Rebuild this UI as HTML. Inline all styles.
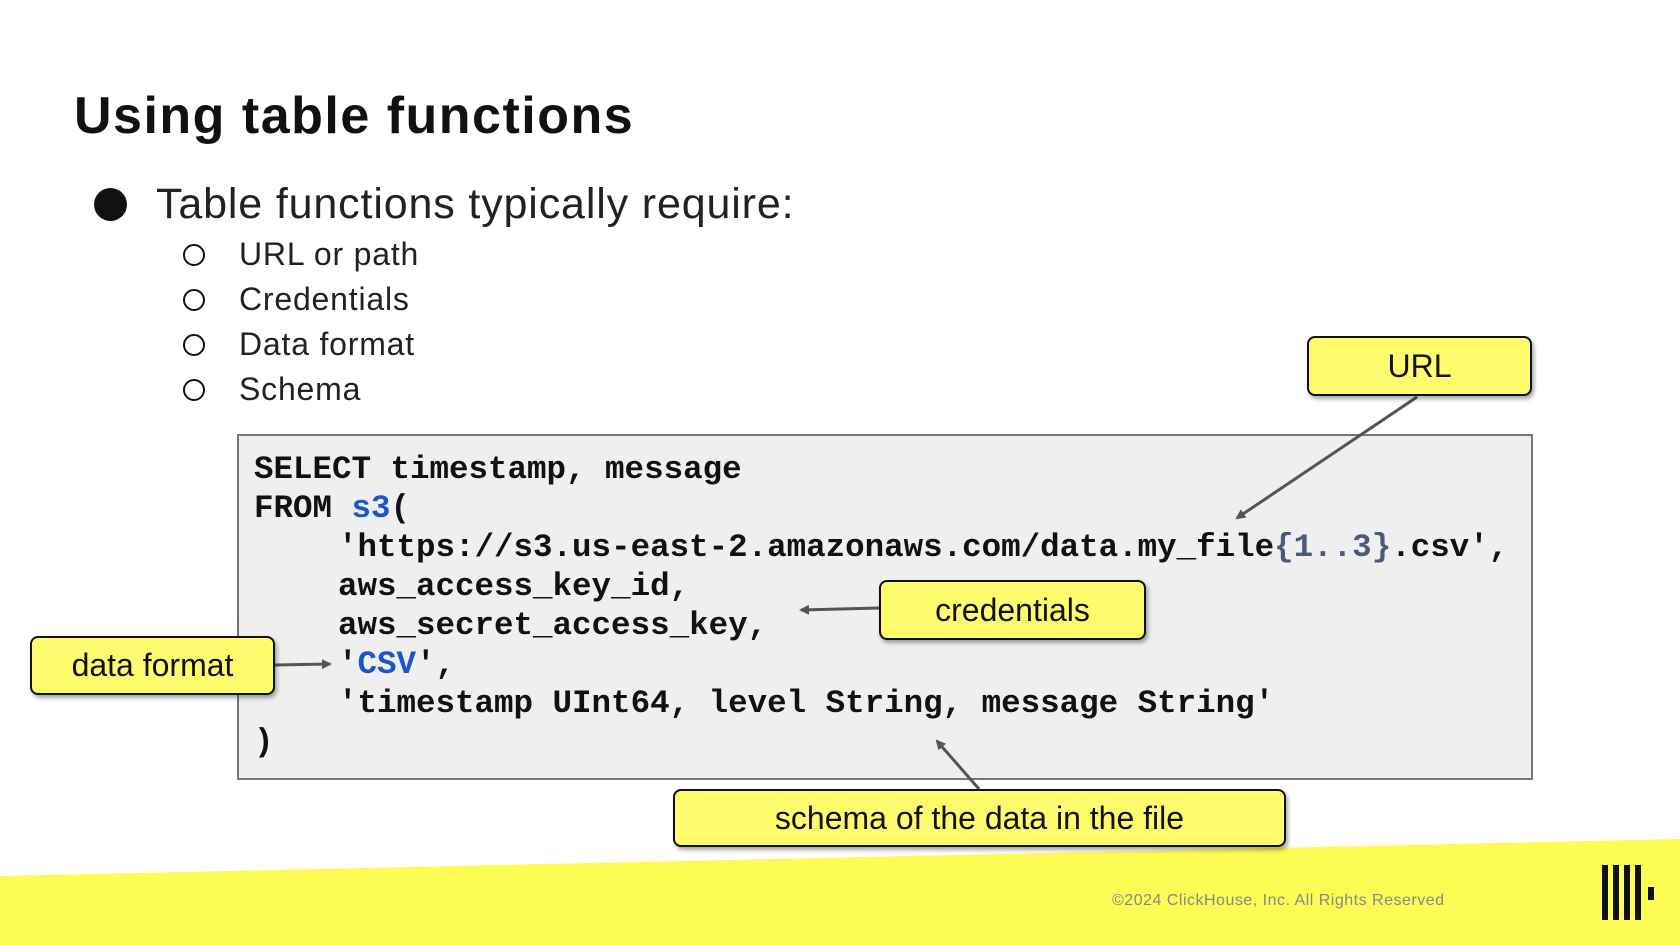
<!DOCTYPE html>
<html><head><meta charset="utf-8"><style>
*{margin:0;padding:0;box-sizing:border-box}
body{width:1680px;height:945px;background:#fff;position:relative;overflow:hidden;font-family:"Liberation Sans",sans-serif;color:#111}
.a{position:absolute;white-space:pre}
h1{position:absolute;left:74px;top:86px;font-size:52px;font-weight:bold;letter-spacing:1.5px}
.sub{font-size:32px;left:239px;color:#222;letter-spacing:0.8px}
.circ{position:absolute;width:22px;height:22px;border:2.5px solid #111;border-radius:50%;left:183px}
.code{position:absolute;left:237px;top:434px;width:1296px;height:346px;background:#efefef;border:2px solid #777}
.cl{position:absolute;font-family:"Liberation Mono",monospace;font-weight:bold;font-size:32.5px;white-space:pre;color:#111;line-height:39px}
.b{color:#1a55cc}.g{color:#4a5a78}
.i{display:inline-block;width:6px}
.call{position:absolute;background:#fcfc6c;border:2px solid #111;border-radius:8px;box-shadow:2px 3px 4px rgba(0,0,0,.35);font-size:32px;display:flex;align-items:center;justify-content:center;color:#111}
</style></head><body>
<h1>Using table functions</h1>
<div style="position:absolute;left:94px;top:188px;width:33px;height:33px;border-radius:50%;background:#111"></div>
<div class="a" style="left:156px;top:180px;font-size:43px;color:#222;letter-spacing:0.85px">Table functions typically require:</div>
<div class="circ" style="top:244px"></div><div class="a sub" style="top:236px">URL or path</div>
<div class="circ" style="top:289px"></div><div class="a sub" style="top:281px">Credentials</div>
<div class="circ" style="top:334px"></div><div class="a sub" style="top:326px">Data format</div>
<div class="circ" style="top:379px"></div><div class="a sub" style="top:371px">Schema</div>
<div class="code"></div>
<div class="cl" style="left:254px;top:450px">SELECT timestamp, message
FROM <span class="b">s3</span>(
    <span class="i"></span>'https://s3.us-east-2.amazonaws.com/data.my_file<span class="g">{1..3}</span>.csv',
    <span class="i"></span>aws_access_key_id,
    <span class="i"></span>aws_secret_access_key,
    <span class="i"></span>'<span class="b">CSV</span>',
    <span class="i"></span>'timestamp UInt64, level String, message String'
)</div>
<svg width="1680" height="945" style="position:absolute;left:0;top:0">
<defs><marker id="m" markerWidth="10" markerHeight="10" refX="8" refY="5" orient="auto" markerUnits="userSpaceOnUse"><path d="M0,0 L10,5 L0,10z" fill="#555"/></marker></defs>
<g stroke="#555" stroke-width="3" marker-end="url(#m)">
<line x1="1417" y1="397" x2="1237" y2="518"/>
<line x1="879" y1="608" x2="801" y2="610"/>
<line x1="275" y1="665" x2="330" y2="664"/>
<line x1="979" y1="789" x2="937" y2="741"/>
</g>
<polygon points="0,876 1680,839 1680,945 0,945" fill="#fcfc55"/>
<g fill="#111"><rect x="1602" y="865" width="6" height="55"/><rect x="1613" y="865" width="6" height="55"/><rect x="1624" y="865" width="6" height="55"/><rect x="1635" y="865" width="6" height="55"/><rect x="1648" y="887" width="6" height="13"/></g>
</svg>
<div class="call" style="left:1307px;top:336px;width:225px;height:60px">URL</div>
<div class="call" style="left:879px;top:580px;width:267px;height:60px">credentials</div>
<div class="call" style="left:30px;top:636px;width:245px;height:59px">data format</div>
<div class="call" style="left:673px;top:789px;width:613px;height:58px">schema of the data in the file</div>
<div class="a" style="left:1112px;top:892px;font-size:16px;color:#888;letter-spacing:0.5px">©2024 ClickHouse, Inc. All Rights Reserved</div>
</body></html>
